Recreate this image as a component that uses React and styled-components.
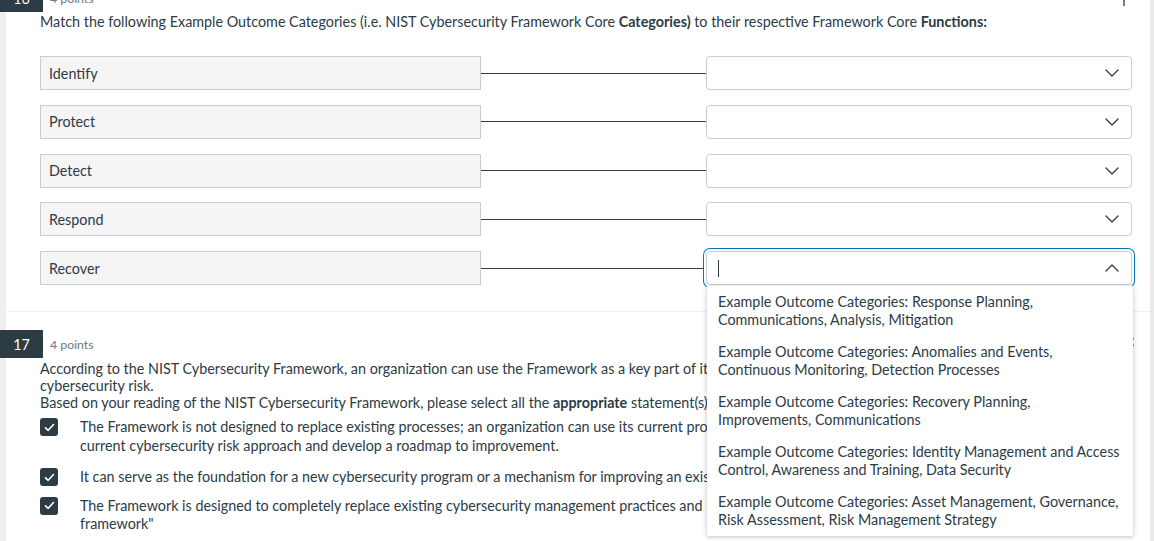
import React from 'react';
import styled, { createGlobalStyle } from 'styled-components';

const GlobalStyle = createGlobalStyle`
  html, body {
    margin: 0;
    padding: 0;
    background: #ffffff;
  }
  body {
    font-family: Lato, "Open Sans", "Liberation Sans", sans-serif;
    color: #2d3b45;
    font-size: 14.35px;
  }
`;

const Frame = styled.div`
  display: flex;
  width: 1154px;
  height: 541px;
  overflow: hidden;
  background: #e8eaec;
`;

const Page = styled.main`
  flex: 1;
  background: #ffffff;
  border-left: 6px solid #f0f0f0;
  margin-right: 4px;
  display: flex;
  flex-direction: column;
`;

const Question = styled.section`
  display: flex;
  flex-direction: column;
  margin-top: ${(p) => p.$offset || 0}px;
  padding-bottom: ${(p) => p.$bottom || 0}px;
`;

const Header = styled.div`
  display: flex;
  align-items: center;
  height: 28px;
  flex: none;
`;

const Badge = styled.div`
  width: 43px;
  height: 28px;
  margin-left: -6px;
  background: #2d3b45;
  color: #ffffff;
  font-size: 14.35px;
  display: flex;
  align-items: center;
  justify-content: center;
`;

const Points = styled.span`
  margin-left: 7px;
  font-size: 12.3px;
  color: #6b7780;
`;

const Flag = styled.span`
  margin-left: auto;
  margin-right: 14px;
  margin-top: 2px;
  display: flex;
  color: #2d3b45;
`;

const Body = styled.div`
  padding: 0 18px 0 34px;
  display: flex;
  flex-direction: column;
`;

const Prompt = styled.p`
  margin: ${(p) => p.$top || 0}px 0 0;
  line-height: 17px;
`;

const MatchList = styled.div`
  display: flex;
  flex-direction: column;
  gap: 14.75px;
  margin-top: 26px;
`;

const MatchRow = styled.div`
  display: flex;
  align-items: center;
  height: 34px;
`;

const Term = styled.div`
  width: 441px;
  height: 34px;
  box-sizing: border-box;
  border: 1px solid #c7cdd1;
  background: #f5f5f5;
  padding: 0 8px;
  display: flex;
  align-items: center;
`;

const Connector = styled.div`
  flex: 1;
  height: 1px;
  background: #2d3b45;
`;

const SelectWrap = styled.div`
  position: relative;
  width: 426px;
  height: 34px;
`;

const Select = styled.div`
  height: 34px;
  box-sizing: border-box;
  border: 1px solid #c7cdd1;
  border-radius: 4px;
  background: #ffffff;
  display: flex;
  align-items: center;
  justify-content: space-between;
  padding: 0 12px 0 11px;
  box-shadow: ${(p) => (p.$open ? '0 0 0 2px #ffffff, 0 0 0 3px #0374b5' : 'none')};
`;

const Caret = styled.span`
  width: 1px;
  height: 17px;
  background: #2d3b45;
`;

const Menu = styled.ul`
  position: absolute;
  top: 35px;
  left: 1px;
  right: -1px;
  margin: 0;
  padding: 0;
  list-style: none;
  background: #ffffff;
  box-shadow: 0 1px 5px rgba(0, 0, 0, 0.25);
  z-index: 5;
`;

const Option = styled.li`
  padding: 6.5px 11px 7.5px;
  line-height: 18px;
`;

const Divider = styled.hr`
  margin: 0;
  border: 0;
  height: 1px;
  flex: none;
  background: #eef0f1;
`;

const CheckList = styled.div`
  display: flex;
  flex-direction: column;
  margin-top: 7px;
`;

const CheckItem = styled.label`
  display: flex;
  align-items: flex-start;
  line-height: 18.5px;
  margin-top: ${(p) => p.$space || 0}px;
`;

const Box = styled.span`
  width: 18px;
  height: 18px;
  flex: none;
  border-radius: 3px;
  background: #2d3b45;
  display: flex;
  align-items: center;
  justify-content: center;
  margin: 0 22px 0 0;
`;

const Chevron = ({ up }) => (
  <svg width="14" height="8" viewBox="0 0 14 8" fill="none">
    <polyline
      points={up ? '1,7 7,1 13,7' : '1,1 7,7 13,1'}
      stroke="#2d3b45"
      strokeWidth="1.3"
      strokeLinecap="round"
      strokeLinejoin="round"
    />
  </svg>
);

const Check = () => (
  <svg width="11" height="9" viewBox="0 0 11 9" fill="none">
    <polyline points="1.5,4.8 4.2,7.3 9.5,1.5" stroke="#ffffff" strokeWidth="1.6" strokeLinecap="round" strokeLinejoin="round" />
  </svg>
);

const FlagIcon = () => (
  <svg width="14" height="16" viewBox="0 0 14 16" fill="none">
    <path d="M2 1v14M2 2h9l-2 3 2 3H2" stroke="#2d3b45" strokeWidth="1.3" />
  </svg>
);

const terms = ['Identify', 'Protect', 'Detect', 'Respond', 'Recover'];

const options = [
  'Example Outcome Categories: Response Planning, Communications, Analysis, Mitigation',
  'Example Outcome Categories: Anomalies and Events, Continuous Monitoring, Detection Processes',
  'Example Outcome Categories: Recovery Planning, Improvements, Communications',
  'Example Outcome Categories: Identity Management and Access Control, Awareness and Training, Data Security',
  'Example Outcome Categories: Asset Management, Governance, Risk Assessment, Risk Management Strategy',
];

const App = () => {
  return (
    <Frame>
      <GlobalStyle />
      <Page>
        <Question $offset={-16} $bottom={26}>
          <Header>
            <Badge>16</Badge>
            <Points>4 points</Points>
            <Flag><FlagIcon /></Flag>
          </Header>
          <Body>
            <Prompt $top={1}>
              Match the following Example Outcome Categories (i.e. NIST Cybersecurity Framework Core{' '}
              <b>Categories)</b> to their respective Framework Core <b>Functions:</b>
            </Prompt>
            <MatchList>
              {terms.map((t, i) => {
                const open = i === terms.length - 1;
                return (
                  <MatchRow key={t}>
                    <Term>{t}</Term>
                    <Connector />
                    <SelectWrap>
                      <Select $open={open}>
                        {open ? <Caret /> : <span />}
                        <Chevron up={open} />
                      </Select>
                      {open && (
                        <Menu>
                          {options.map((o) => (
                            <Option key={o}>{o}</Option>
                          ))}
                        </Menu>
                      )}
                    </SelectWrap>
                  </MatchRow>
                );
              })}
            </MatchList>
          </Body>
        </Question>
        <Divider />
        <Question $offset={18}>
          <Header>
            <Badge>17</Badge>
            <Points>4 points</Points>
            <Flag><FlagIcon /></Flag>
          </Header>
          <Body>
            <Prompt $top={2}>
              According to the NIST Cybersecurity Framework, an organization can use the Framework as a key part of its systematic process
              <br />
              cybersecurity risk.
              <br />
              Based on your reading of the NIST Cybersecurity Framework, please select all the <b>appropriate</b> statement(s) about the Framework:
            </Prompt>
            <CheckList>
              <CheckItem>
                <Box><Check /></Box>
                <span>
                  The Framework is not designed to replace existing processes; an organization can use its current process and overlay it
                  <br />
                  current cybersecurity risk approach and develop a roadmap to improvement.
                </span>
              </CheckItem>
              <CheckItem $space={13}>
                <Box><Check /></Box>
                <span>It can serve as the foundation for a new cybersecurity program or a mechanism for improving an existing program.</span>
              </CheckItem>
              <CheckItem $space={10}>
                <Box><Check /></Box>
                <span>
                  The Framework is designed to completely replace existing cybersecurity management practices and replace them with a
                  <br />
                  framework"
                </span>
              </CheckItem>
            </CheckList>
          </Body>
        </Question>
      </Page>
    </Frame>
  );
};

export default App;
